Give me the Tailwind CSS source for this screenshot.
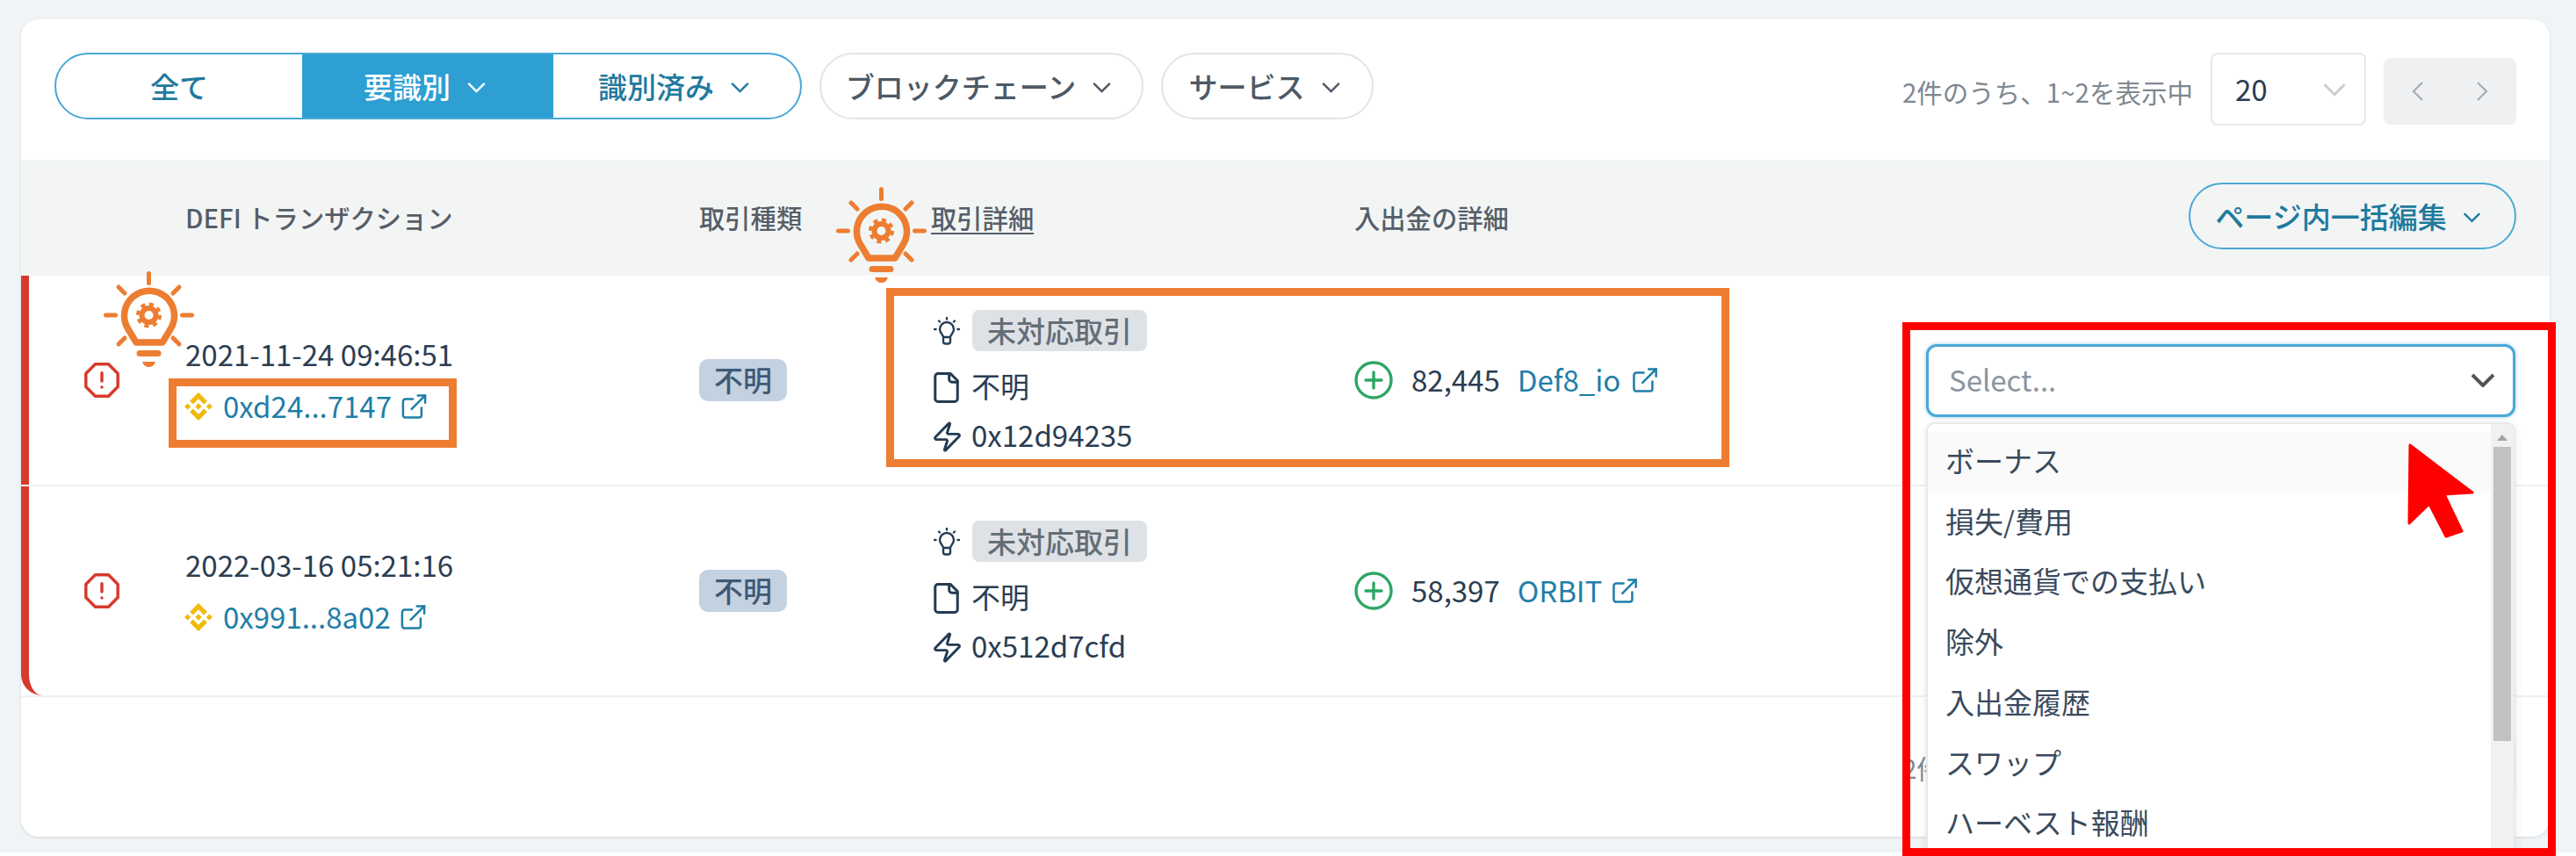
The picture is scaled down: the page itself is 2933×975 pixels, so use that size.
<!DOCTYPE html>
<html lang="ja">
<head>
  <meta charset="UTF-8">
  <title>DEFI トランザクション</title>
  <script src="https://cdn.jsdelivr.net/npm/@tailwindcss/browser@4"></script>
</head>
<body class="bg-white font-['Noto_Sans_CJK_JP','Noto_Sans',sans-serif] text-[33px] text-[#2b3d52]">
  <!-- shared icons -->
  <svg class="hidden">
    <symbol id="chev" viewBox="0 0 24 14"><path d="M2 2l10 10L22 2" fill="none" stroke="currentColor" stroke-width="2.6"/></symbol>
    <symbol id="ext" viewBox="2 2 20 20"><g fill="none" stroke="currentColor" stroke-width="1.8" stroke-linecap="round" stroke-linejoin="round"><path d="M15 3h6v6"/><path d="M10 14 21 3"/><path d="M18 13v6a2 2 0 0 1-2 2H5a2 2 0 0 1-2-2V8a2 2 0 0 1 2-2h6"/></g></symbol>
    <symbol id="bnb" viewBox="0 0 32 32"><path fill="#f0b90b" d="M9.79 13.44 16 7.24l6.21 6.21 3.61-3.61L16 0 6.18 9.82zM0 16l3.61-3.61L7.22 16l-3.61 3.61zM9.79 18.56 16 24.76l6.21-6.21 3.61 3.61L16 32l-9.82-9.82zM24.78 16l3.61-3.61L32 16l-3.61 3.61zM19.66 16 16 12.34 12.34 16 16 19.66z"/></symbol>
    <symbol id="alert" viewBox="1 1 22 22"><g fill="none" stroke="#d63a2c" stroke-width="1.9" stroke-linecap="round" stroke-linejoin="round"><path d="M7.86 2h8.28L22 7.86v8.28L16.14 22H7.86L2 16.14V7.86z"/><path d="M12 7.5v5"/><path d="M12 16.4h.01"/></g></symbol>
    <symbol id="tip" viewBox="0 0 30 32"><g fill="none" stroke="#243b53" stroke-width="2.4" stroke-linecap="round" stroke-linejoin="round"><path d="M11 23c0-3-4-4-4-9a8 8 0 0 1 16 0c0 5-4 6-4 9z"/><path d="M11 24v4a2.5 2.5 0 0 0 2.5 2.5h3A2.5 2.5 0 0 0 19 28v-4"/><path d="M15 1v1.5M6 4.5l1 1M24 4.5l-1 1M1 14h1.5M27.500 14H29"/></g></symbol>
    <symbol id="doc" viewBox="3 1 18 22"><g fill="none" stroke="#243b53" stroke-width="1.9" stroke-linecap="round" stroke-linejoin="round"><path d="M15 2H6a2 2 0 0 0-2 2v16a2 2 0 0 0 2 2h12a2 2 0 0 0 2-2V7Z"/><path d="M14 2v4a2 2 0 0 0 2 2h4"/></g></symbol>
    <symbol id="zap" viewBox="2 1 20 22"><path fill="none" stroke="#243b53" stroke-width="1.9" stroke-linecap="round" stroke-linejoin="round" d="M4 14a1 1 0 0 1-.78-1.63l9.9-10.2a.5.5 0 0 1 .86.46l-1.92 6.02A1 1 0 0 0 13 10h7a1 1 0 0 1 .78 1.63l-9.9 10.2a.5.5 0 0 1-.86-.46l1.92-6.02A1 1 0 0 0 11 14z"/></symbol>
    <symbol id="plus" viewBox="0 0 44 44"><g fill="none" stroke="#2ea665" stroke-width="3.4" stroke-linecap="round"><circle cx="22" cy="22" r="20"/><path d="M22 13v18M13 22h18"/></g></symbol>
    <symbol id="bulb" viewBox="0 0 103 109">
      <g fill="none" stroke="#ed7d31" stroke-linecap="round" stroke-linejoin="round">
        <path stroke-width="7.500" d="M37 81 28 66A28.500 28.500 0 1 1 76 66L67 81Z"/>
        <path stroke-width="5" d="M51.500 2.500v11M17 18l7 7M86 18l-7 7M2.500 50h11M89.500 50h11M17 83l7-7M86 83l-7-7"/>
        <path stroke-width="7" d="M41 93.500h21"/>
        <circle cx="51.500" cy="50" r="8" stroke-width="6" stroke-linecap="butt"/>
        <circle cx="51.500" cy="50" r="12" stroke-width="5" stroke-linecap="butt" stroke-dasharray="4.900 4.525"/>
      </g>
      <path fill="#ed7d31" d="M44 103H59Q57 109 51.500 109Q46 109 44 103Z"/>
    </symbol>
  </svg>

  <div class="relative w-[2933px] h-[975px] overflow-hidden">
    <div class="h-[971px] bg-[#f0f4f7] pt-[22px] pl-[24px]">
      <div class="w-[2879px] h-[931px] bg-white rounded-[20px] shadow-[0_1px_3px_rgba(0,0,0,0.12)]">

        <!-- toolbar -->
        <div class="h-[160px] px-[38px] pt-[38px] flex items-start justify-between">
          <div class="flex gap-[20px]">
            <div class="flex w-[851px] h-[76px] rounded-full border-2 border-[#4aa8d5] overflow-hidden font-medium text-[#1f7a9e]">
              <div class="w-[280px] flex items-center justify-center pt-[2px]">全て</div>
              <div class="w-[286px] bg-[#2d9fd3] text-white flex items-center justify-center gap-[18px] pt-[2px] pr-[6px]">要識別<svg class="w-[23px] h-[13px]"><use href="#chev"/></svg></div>
              <div class="flex-1 flex items-center justify-center gap-[18px] pt-[2px] pr-[6px]">識別済み<svg class="w-[23px] h-[13px]"><use href="#chev"/></svg></div>
            </div>
            <div class="w-[369px] h-[76px] rounded-full border-2 border-[#e1e5e7] flex items-center justify-center gap-[18px] font-medium text-[#4d5965] pt-[2px] pr-[6px]">ブロックチェーン<svg class="w-[23px] h-[13px]"><use href="#chev"/></svg></div>
            <div class="w-[242px] h-[76px] rounded-full border-2 border-[#e1e5e7] flex items-center justify-center gap-[18px] font-medium text-[#4d5965] pt-[2px] pr-[6px]">サービス<svg class="w-[23px] h-[13px]"><use href="#chev"/></svg></div>
          </div>
          <div class="flex items-center h-[83px]">
            <span class="text-[29.5px] text-[#7e8791] mr-[20px] mt-[6px]">2件のうち、1~2を表示中</span>
            <div class="w-[177px] h-[83px] rounded-[8px] border-2 border-[#e5e9ea] flex items-center justify-between pl-[26px] pr-[20px]"><span>20</span><svg class="w-[28px] h-[16px] text-[#cccccc]"><use href="#chev"/></svg></div>
            <div class="ml-[20px] mt-[4px] w-[151px] h-[76px] rounded-[8px] bg-[#eff0f2] flex items-center justify-between px-[32px] text-[#a8adb2]">
              <svg class="w-[14px] h-[22px]" viewBox="0 0 14 22"><path d="M12 1 2 11l10 10" fill="none" stroke="currentColor" stroke-width="2.200"/></svg>
              <svg class="w-[14px] h-[22px]" viewBox="0 0 14 22"><path d="m2 1 10 10L2 21" fill="none" stroke="currentColor" stroke-width="2.200"/></svg>
            </div>
          </div>
        </div>

        <!-- table header -->
        <div class="h-[132px] bg-[#f3f5f5] grid grid-cols-[188px_584px_264px_482px_651px_672px] items-center text-[29.3px] font-medium text-[#555e68]">
          <div></div>
          <div class="-mt-[1px] -ml-[1px]">DEFI トランザクション</div>
          <div class="-mt-[1px]">取引種類</div>
          <div class="-mt-[1px]"><span class="border-b-2 border-[#555e68] leading-[36px] inline-block">取引詳細</span></div>
          <div class="-mt-[1px]">入出金の詳細</div>
          <div class="flex justify-end">
            <div class="w-[373px] h-[76px] rounded-full border-2 border-[#4aa8d5] flex items-center justify-center gap-[18px] text-[33px] text-[#1f7a9e] -mt-[4px] pt-[2px] pr-[10px]">ページ内一括編集<svg class="w-[21px] h-[13px]"><use href="#chev"/></svg></div>
          </div>
        </div>

        <!-- row 1 -->
        <div class="h-[240px] border-b-2 border-[#eef0f2]">
          <div class="h-full border-l-[9px] border-[#d63a2c] grid grid-cols-[179px_584px_264px_482px_651px_672px]">
            <div class="flex items-center pl-[63px]"><svg class="w-[40px] h-[40px]"><use href="#alert"/></svg></div>
            <div class="pt-[65px]">
              <div class="leading-[48px] -ml-[1px]">2021-11-24 09:46:51</div>
              <div class="mt-[12px] h-[48px] flex items-center -ml-[2px] text-[#1f7ea8]">
                <svg class="w-[32px] h-[32px] mr-[12px]"><use href="#bnb"/></svg>0xd24...7147<svg class="w-[29px] h-[28px] ml-[11px]"><use href="#ext"/></svg>
              </div>
            </div>
            <div class="flex items-center">
              <span class="w-[100px] h-[48px] rounded-[10px] bg-[#c4d1e0] flex items-center justify-center font-medium text-[#3f5a75]">不明</span>
            </div>
            <div class="pt-[39px]">
              <div class="flex items-center h-[47px] pl-[3px]">
                <svg class="w-[30px] h-[32px] mr-[14px]"><use href="#tip"/></svg>
                <span class="h-[47px] px-[17px] rounded-[8px] bg-[#dee2e6] flex items-center text-[#656e77] font-medium">未対応取引</span>
              </div>
              <div class="mt-[19px] h-[44px] flex items-center pl-[3px]"><svg class="w-[29px] h-[35px] mr-[14px]"><use href="#doc"/></svg><span class="-mt-[3px]">不明</span></div>
              <div class="mt-[12px] h-[44px] flex items-center pl-[3px]"><svg class="w-[31px] h-[35px] mr-[12px]"><use href="#zap"/></svg><span class="-mt-[3px]">0x12d94235</span></div>
            </div>
            <div class="flex items-center">
              <svg class="w-[44px] h-[44px] mr-[21px]"><use href="#plus"/></svg>82,445
              <span class="ml-[20px] text-[#1f7ea8]">Def8_io</span>
              <svg class="w-[28px] h-[28px] ml-[14px] text-[#1f7ea8]"><use href="#ext"/></svg>
            </div>
            <div class="relative flex items-center">
              <div class="w-[671px] h-[83px] rounded-[12px] border-[3px] border-[#4aa8d5] shadow-[0_0_4px_rgba(74,168,213,0.6)] bg-white flex items-center justify-between pl-[23px] pr-[20px] text-[#8b95a0]">
                Select...
                <svg class="w-[28px] h-[16px] text-[#555555]" viewBox="0 0 28 16"><path d="M2 2l12 12L26 2" fill="none" stroke="currentColor" stroke-width="4"/></svg>
              </div>
              <!-- open menu -->
              <div class="absolute z-10 left-0 top-[167px] w-[671px] h-[494px] bg-white rounded-t-[10px] border-2 border-[#e8e8e8] shadow-[0_2px_10px_rgba(0,0,0,0.1)] pt-[9px] overflow-hidden text-[#3a4a5c]">
                <div class="h-[68.700px] pl-[20px] pb-[3px] flex items-center bg-[#fafafa]">ボーナス</div>
                <div class="h-[68.700px] pl-[20px] pb-[3px] flex items-center">損失/費用</div>
                <div class="h-[68.700px] pl-[20px] pb-[3px] flex items-center">仮想通貨での支払い</div>
                <div class="h-[68.700px] pl-[20px] pb-[3px] flex items-center">除外</div>
                <div class="h-[68.700px] pl-[20px] pb-[3px] flex items-center">入出金履歴</div>
                <div class="h-[68.700px] pl-[20px] pb-[3px] flex items-center">スワップ</div>
                <div class="h-[68.700px] pl-[20px] pb-[3px] flex items-center">ハーベスト報酬</div>
                <div class="absolute right-0 top-0 bottom-0 w-[26px] bg-[#f1f1f1]">
                  <svg class="absolute left-[7px] top-[12px] w-[12px] h-[7px]" viewBox="0 0 12 7"><path d="M6 0l6 7H0z" fill="#a3a3a3"/></svg>
                  <div class="absolute left-[3px] top-[26px] w-[20px] h-[335px] bg-[#c1c1c1]"></div>
                </div>
              </div>
            </div>
          </div>
        </div>

        <!-- row 2 -->
        <div class="h-[240px] border-b-2 border-[#eef0f2]">
          <div class="h-full border-l-[9px] border-[#d63a2c] rounded-bl-[24px] grid grid-cols-[179px_584px_264px_482px_651px_672px]">
            <div class="flex items-center pl-[63px]"><svg class="w-[40px] h-[40px]"><use href="#alert"/></svg></div>
            <div class="pt-[65px]">
              <div class="leading-[48px] -ml-[1px]">2022-03-16 05:21:16</div>
              <div class="mt-[12px] h-[48px] flex items-center -ml-[2px] text-[#1f7ea8]">
                <svg class="w-[32px] h-[32px] mr-[12px]"><use href="#bnb"/></svg>0x991...8a02<svg class="w-[29px] h-[28px] ml-[11px]"><use href="#ext"/></svg>
              </div>
            </div>
            <div class="flex items-center">
              <span class="w-[100px] h-[48px] rounded-[10px] bg-[#c4d1e0] flex items-center justify-center font-medium text-[#3f5a75]">不明</span>
            </div>
            <div class="pt-[39px]">
              <div class="flex items-center h-[47px] pl-[3px]">
                <svg class="w-[30px] h-[32px] mr-[14px]"><use href="#tip"/></svg>
                <span class="h-[47px] px-[17px] rounded-[8px] bg-[#dee2e6] flex items-center text-[#656e77] font-medium">未対応取引</span>
              </div>
              <div class="mt-[19px] h-[44px] flex items-center pl-[3px]"><svg class="w-[29px] h-[35px] mr-[14px]"><use href="#doc"/></svg><span class="-mt-[3px]">不明</span></div>
              <div class="mt-[12px] h-[44px] flex items-center pl-[3px]"><svg class="w-[31px] h-[35px] mr-[12px]"><use href="#zap"/></svg><span class="-mt-[3px]">0x512d7cfd</span></div>
            </div>
            <div class="flex items-center">
              <svg class="w-[44px] h-[44px] mr-[21px]"><use href="#plus"/></svg>58,397
              <span class="ml-[20px] text-[#1f7ea8]">ORBIT</span>
              <svg class="w-[28px] h-[28px] ml-[12px] text-[#1f7ea8]"><use href="#ext"/></svg>
            </div>
            <div class="flex items-center">
              <div class="w-[671px] h-[83px] rounded-[12px] border-2 border-[#dee2e6]"></div>
            </div>
          </div>
        </div>

        <!-- footer pagination, mostly behind the open menu -->
        <div class="flex justify-end items-center pr-[38px] pt-[42px]">
          <span class="text-[29.5px] text-[#7e8791] mr-[20px]">2件のうち、1~2を表示中</span>
          <div class="w-[177px] h-[76px] rounded-[8px] border-2 border-[#e5e9ea]"></div>
          <div class="ml-[20px] w-[151px] h-[67px] rounded-[8px] bg-[#eff0f2]"></div>
        </div>
      </div>
    </div>

    <!-- annotations drawn over the screenshot -->
    <svg class="absolute left-[118px] top-[309px] w-[103px] h-[109px]"><use href="#bulb"/></svg>
    <svg class="absolute left-[952px] top-[213px] w-[103px] h-[109px]"><use href="#bulb"/></svg>
    <div class="absolute left-[192px] top-[431px] w-[328px] h-[79px] border-[9px] border-[#ed7d31]"></div>
    <div class="absolute left-[1009px] top-[328px] w-[960px] h-[204px] border-[9px] border-[#ed7d31]"></div>
    <div class="absolute z-20 left-[2166px] top-[367px] w-[744px] h-[608px] border-[9px] border-[#ff0000]"></div>
    <svg class="absolute z-20 left-[2740px] top-[503px] w-[80px] h-[112px]" viewBox="2740 503 80 112"><path fill="#ff0000" stroke="#ff0000" stroke-width="3" stroke-linejoin="round" d="M2744 507 2815 561 2783 563 2803 605 2785 611 2766 574 2743 596Z"/></svg>
  </div>
</body>
</html>
